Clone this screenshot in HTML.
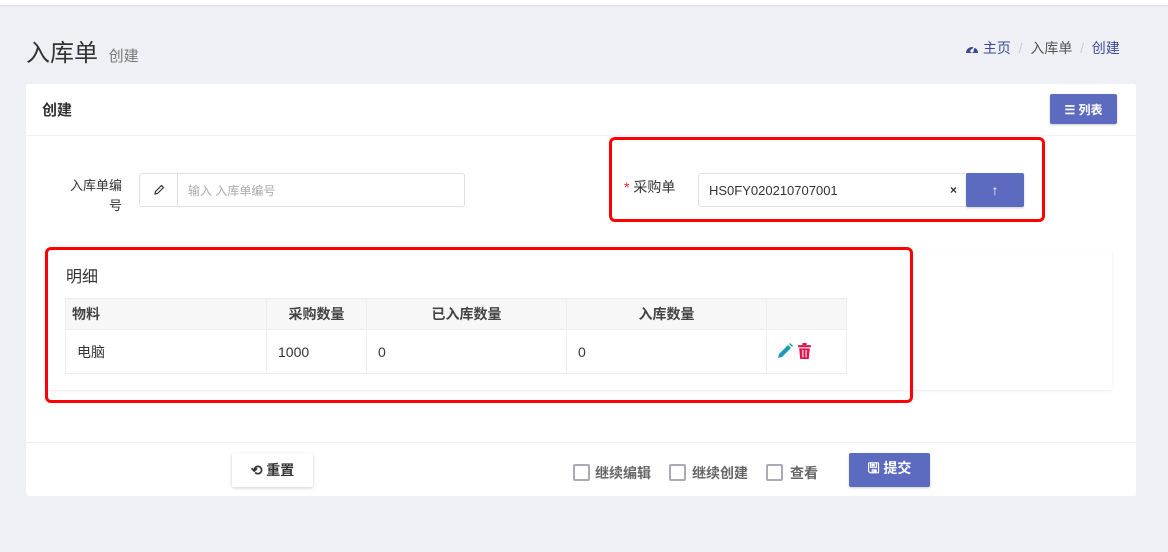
<!DOCTYPE html>
<html><head><meta charset="utf-8"><style>
*{box-sizing:border-box;margin:0;padding:0}
body{width:1168px;height:552px;background:#eff0f5;font-family:"Liberation Sans","Noto Sans CJK SC",sans-serif;color:#333;position:relative;overflow:hidden;font-size:13px}
.abs{position:absolute}
.top{left:0;top:0;width:1168px;height:5px;background:#fff;box-shadow:0 1px 3px rgba(0,0,0,.08)}
.card{left:26px;top:84px;width:1110px;height:412px;background:#fff;border-radius:3px}
.btn{background:#5c6bc0;color:#fff;border-radius:2px;box-shadow:0 1px 2px rgba(0,0,0,.2);display:flex;align-items:center;justify-content:center;font-weight:bold}
.red{border:3px solid #f00;border-radius:6px}
table{border-collapse:collapse;font-size:14px}
td,th{border:1px solid #eee}
th{background:#f7f7f7;height:31px;font-weight:bold;color:#444}
td{height:44px;padding-left:11px}
.cb{position:absolute;width:17px;height:17px;border:2px solid #aab;border-radius:2px}
.cl{position:absolute;font-size:14px;color:#666;font-weight:bold;top:463px}
</style></head><body>
<div class="abs top"></div>
<div class="abs" style="left:26px;top:33px;font-size:24px;color:#333">入库单 <span style="font-size:15px;color:#777;margin-left:4px">创建</span></div>
<div class="abs" style="left:965px;top:38px;font-size:14px;color:#555;white-space:nowrap"><svg width="14" height="12" viewBox="0 0 14 12" style="vertical-align:-1px"><path d="M1 11A6 6 0 1 1 13 11Z" fill="#3c4a96"/><circle cx="7" cy="9" r="1.6" fill="#fff"/><path d="M7 9L10 4" stroke="#fff" stroke-width="1.4"/></svg> <span style="color:#3c4a96">主页</span><span style="color:#ccc">&nbsp; / &nbsp;</span>入库单<span style="color:#ccc">&nbsp; / &nbsp;</span><span style="color:#3c4a96">创建</span></div>
<div class="abs card"></div>
<div class="abs" style="left:42px;top:99px;font-size:15px;font-weight:bold;color:#333">创建</div>
<div class="abs btn" style="left:1050px;top:94px;width:67px;height:30px;font-size:12px">☰ 列表</div>
<div class="abs" style="left:26px;top:135px;width:1110px;height:1px;background:#f0f0f0"></div>
<div class="abs" style="left:58px;top:176px;width:64px;text-align:right;font-size:13px;line-height:20px;color:#333">入库单编号</div>
<div class="abs" style="left:139px;top:173px;width:326px;height:34px;border:1px solid #dde;border-radius:3px;display:flex;align-items:center;font-size:12px;color:#aaa"><div style="width:38px;height:100%;border-right:1px solid #dde;display:flex;align-items:center;justify-content:center"><svg width="12" height="12" viewBox="0 0 12 12"><path d="M2 10L2.5 7.5L8.5 1.5L10.5 3.5L4.5 9.5Z" fill="none" stroke="#333" stroke-width="1.2"/></svg></div><span style="margin-left:10px">输入 入库单编号</span></div>
<div class="abs red" style="left:609px;top:137px;width:436px;height:85px"></div>
<div class="abs" style="left:624px;top:177px;font-size:14px"><span style="color:#e22">*</span> 采购单</div>
<div class="abs" style="left:698px;top:173px;width:270px;height:34px;border:1px solid #dde;border-radius:3px 0 0 3px;display:flex;align-items:center;font-size:13px;color:#333;padding-left:10px">HS0FY020210707001<span style="position:absolute;right:10px;font-size:12px;font-weight:bold">×</span></div>
<div class="abs btn" style="left:966px;top:173px;width:58px;height:34px;font-size:14px">↑</div>
<div class="abs" style="left:46px;top:250px;width:1066px;height:140px;background:#fff;box-shadow:0 1px 3px rgba(0,0,0,.08)"></div>
<div class="abs" style="left:66px;top:263px;font-size:16px">明细</div>
<table class="abs" style="left:65px;top:298px;width:782px">
<tr><th style="width:201px;text-align:left;padding-left:6px">物料</th><th style="width:100px">采购数量</th><th style="width:200px">已入库数量</th><th style="width:200px">入库数量</th><th></th></tr>
<tr><td>电脑</td><td>1000</td><td>0</td><td>0</td><td style="padding-left:10px"><svg width="17" height="16" viewBox="0 0 17 16" style="vertical-align:-2px"><path d="M1 15L2 11L11 2L14 5L5 14Z" fill="#1a9ab8"/><path d="M12 1L13 0L16 3L15 4Z" fill="#1a9ab8"/></svg><svg width="15" height="16" viewBox="0 0 14 15" style="vertical-align:-2px;margin-left:3px"><rect x="1" y="2" width="12" height="2" fill="#e0144c"/><rect x="5" y="0" width="4" height="2" fill="#e0144c"/><path d="M2 5h10l-1 10H3z" fill="#e0144c"/><path d="M5.5 6.5v7M8.5 6.5v7" stroke="#fff" stroke-width="1"/></svg></td></tr>
</table>
<div class="abs red" style="left:45px;top:247px;width:868px;height:156px"></div>
<div class="abs" style="left:26px;top:442px;width:1110px;height:1px;background:#f0f0f0"></div>
<div class="abs" style="left:232px;top:453px;width:81px;height:34px;background:#fff;box-shadow:0 1px 3px rgba(0,0,0,.2);border-radius:2px;display:flex;align-items:center;justify-content:center;font-size:14px;font-weight:bold">⟲ 重置</div>
<span class="cb" style="left:573px;top:464px"></span><span class="cl" style="left:595px">继续编辑</span>
<span class="cb" style="left:669px;top:464px"></span><span class="cl" style="left:692px">继续创建</span>
<span class="cb" style="left:766px;top:464px"></span><span class="cl" style="left:790px">查看</span>
<div class="abs btn" style="left:849px;top:453px;width:81px;height:34px;font-size:14px">🖫 提交</div>
</body></html>
